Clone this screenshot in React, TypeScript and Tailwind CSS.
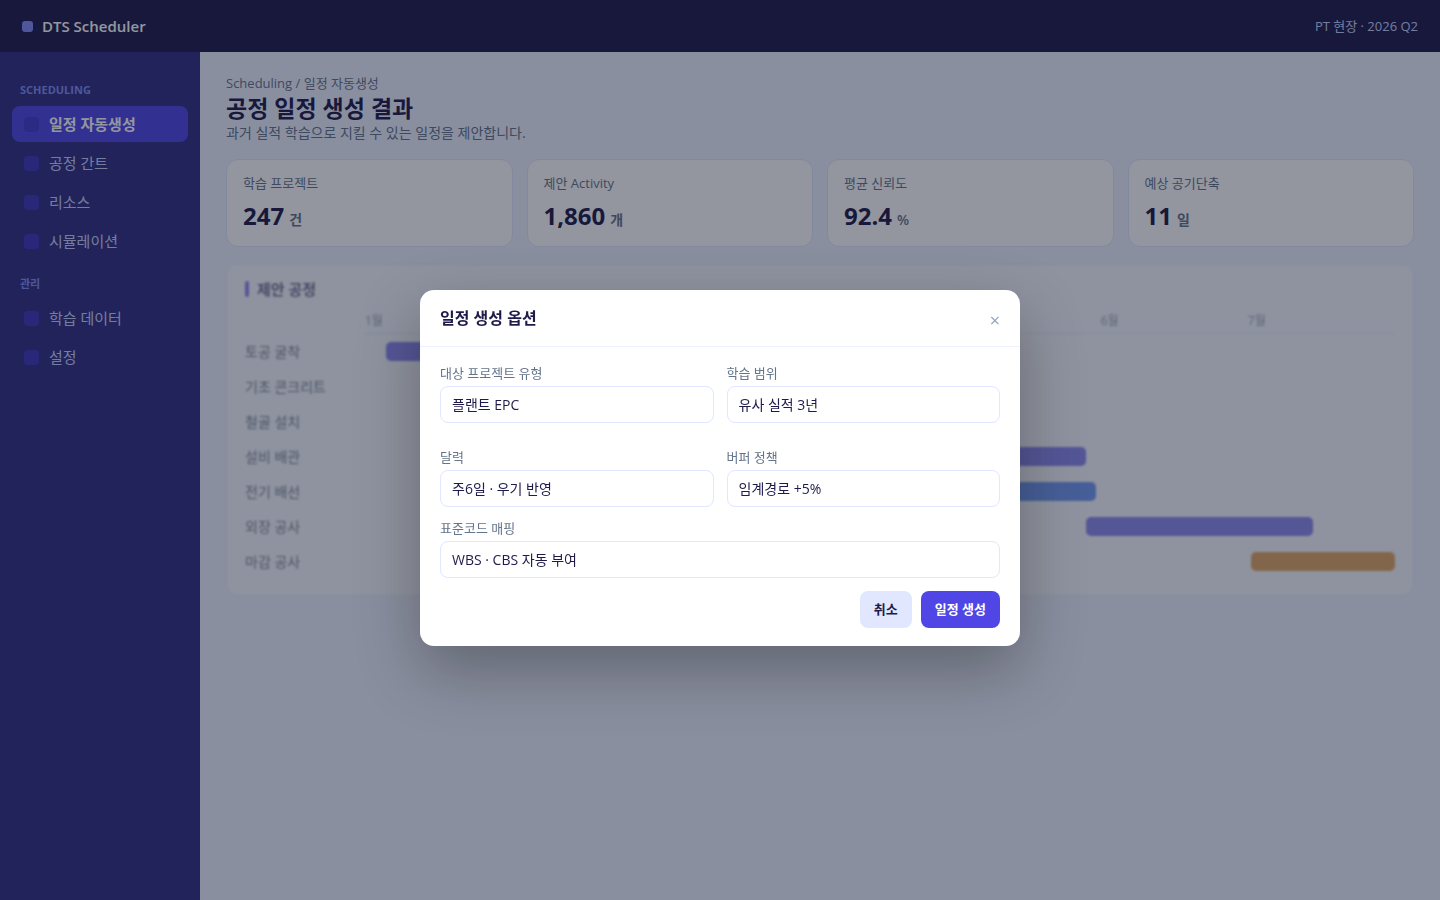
import { useState } from 'react';

interface NavGroup {
  title: string;
  items: string[];
}

const navGroups: NavGroup[] = [
  { title: 'SCHEDULING', items: ['일정 자동생성', '공정 간트', '리소스', '시뮬레이션'] },
  { title: '관리', items: ['학습 데이터', '설정'] },
];

const stats = [
  { label: '학습 프로젝트', value: '247', unit: '건' },
  { label: '제안 Activity', value: '1,860', unit: '개' },
  { label: '평균 신뢰도', value: '92.4', unit: '%' },
  { label: '예상 공기단축', value: '11', unit: '일' },
];

const months = ['1월', '2월', '3월', '4월', '5월', '6월', '7월'];

// start / width are percentages of the timeline
const tasks = [
  { name: '토공 굴착', start: 2, width: 18, color: 'bg-[#4f46e5]' },
  { name: '기초 콘크리트', start: 14, width: 20, color: 'bg-[#2563eb]' },
  { name: '철골 설치', start: 30, width: 24, color: 'bg-[#4f46e5]' },
  { name: '설비 배관', start: 44, width: 26, color: 'bg-[#4f46e5]' },
  { name: '전기 배선', start: 50, width: 21, color: 'bg-[#2563eb]' },
  { name: '외장 공사', start: 70, width: 22, color: 'bg-[#4f46e5]' },
  { name: '마감 공사', start: 86, width: 14, color: 'bg-[#d97706]' },
];

const Header = () => (
  <header className="flex h-[52px] items-center justify-between bg-[#1e1b4b] px-[22px]">
    <div className="flex items-center gap-[9px]">
      <span className="h-[11px] w-[11px] rounded-[3px] bg-[#818cf8]" />
      <span className="text-[15px] font-semibold text-white">DTS Scheduler</span>
    </div>
    <span className="pt-[2px] text-[13px] text-[#c7d2fe]">PT 현장 · 2026 Q2</span>
  </header>
);

const Sidebar = () => {
  const [active, setActive] = useState('일정 자동생성');

  return (
    <nav className="flex w-[200px] shrink-0 flex-col gap-[3px] bg-[#312e81] px-3 pt-4">
      {navGroups.map((group) => (
        <div key={group.title} className="mt-[14px] flex flex-col gap-[3px]">
          <h2 className="mb-[5px] px-2 text-[11px] leading-4 font-bold text-[#818cf8]">{group.title}</h2>
          {group.items.map((item) => (
            <button
              key={item}
              type="button"
              onClick={() => setActive(item)}
              className={`flex h-9 items-center gap-[10px] rounded-lg px-3 text-left text-[15px] ${
                item === active ? 'bg-[#4f46e5] font-semibold text-white' : 'text-[#c7d2fe]'
              }`}
            >
              <span className="h-[15px] w-[15px] rounded-[4px] bg-[#4338ca] opacity-80" />
              {item}
            </button>
          ))}
        </div>
      ))}
    </nav>
  );
};

const StatCards = () => (
  <div className="grid grid-cols-4 gap-[14px]">
    {stats.map((stat) => (
      <div key={stat.label} className="flex h-[88px] flex-col gap-2 rounded-xl border border-[#e0e7ff] bg-white px-4 pt-[14px]">
        <span className="text-[13px] leading-[18px] text-[#64748b]">{stat.label}</span>
        <p className="text-[24px] leading-8 font-bold text-[#1e1b4b]">
          {stat.value}
          <span className="ml-[5px] text-[14px] font-semibold text-[#64748b]">{stat.unit}</span>
        </p>
      </div>
    ))}
  </div>
);

const GanttCard = () => (
  <section className="mt-[17px] rounded-xl border border-[#e0e7ff] bg-white px-[18px] pt-[14px] pb-4 opacity-60 blur-[1px]">
    <h2 className="flex items-center gap-2 text-[15px] leading-5 font-bold text-[#1e1b4b]">
      <span className="h-4 w-1 rounded-[2px] bg-[#4f46e5]" />
      제안 공정
    </h2>
    <div className="mt-[10px] ml-[120px] flex h-[25px] border-b border-[#e0e7ff]">
      {months.map((month) => (
        <span key={month} className="flex-1 text-[12px] leading-6 text-[#64748b]">{month}</span>
      ))}
    </div>
    <div className="flex flex-col">
      {tasks.map((task) => (
        <div key={task.name} className="flex h-[35px] items-center">
          <span className="w-[120px] shrink-0 text-[14px] text-[#334155]">{task.name}</span>
          <div className="flex-1">
            <div
              className={`h-[19px] rounded-[5px] ${task.color}`}
              style={{ marginLeft: `${task.start}%`, width: `${task.width}%` }}
            />
          </div>
        </div>
      ))}
    </div>
  </section>
);

interface FieldProps {
  id: string;
  label: string;
  value: string;
}

const Field = ({ id, label, value }: FieldProps) => (
  <div className="mb-[13px] flex flex-col gap-[5px]">
    <label htmlFor={id} className="text-[13px] leading-4 text-[#64748b]">{label}</label>
    <input
      id={id}
      type="text"
      defaultValue={value}
      className="h-[37px] w-full rounded-lg border border-[#e0e7ff] bg-white px-[11px] pb-[2px] text-[14px] text-[#1e1b4b] outline-none focus:border-[#818cf8]"
    />
  </div>
);

const OptionsModal = ({ onClose }: { onClose: () => void }) => (
  <div className="fixed inset-0 flex items-center justify-center bg-[#0f172a]/45 pt-9">
    <div
      role="dialog"
      aria-labelledby="options-title"
      className="w-[600px] max-w-full rounded-[14px] bg-white shadow-[0_24px_64px_rgba(0,0,0,0.3)]"
    >
      <div className="flex h-[57px] items-center justify-between border-b border-[#eef2ff] px-5">
        <h2 id="options-title" className="text-[16px] font-semibold text-[#1e1b4b]">일정 생성 옵션</h2>
        <button type="button" onClick={onClose} aria-label="닫기" className="pt-1 text-[18px] leading-6 font-medium text-[#94a3b8]">
          ×
        </button>
      </div>
      <form className="px-5 py-[18px]" onSubmit={(e) => e.preventDefault()}>
        <div className="grid grid-cols-2 gap-[13px]">
          <Field id="project-type" label="대상 프로젝트 유형" value="플랜트 EPC" />
          <Field id="range" label="학습 범위" value="유사 실적 3년" />
          <Field id="calendar" label="달력" value="주6일 · 우기 반영" />
          <Field id="buffer" label="버퍼 정책" value="임계경로 +5%" />
        </div>
        <Field id="mapping" label="표준코드 매핑" value="WBS · CBS 자동 부여" />
        <div className="flex justify-end gap-[9px]">
          <button
            type="button"
            onClick={onClose}
            className="h-[37px] rounded-lg bg-[#e0e7ff] px-[14px] text-[13px] font-bold text-[#1e1b4b]"
          >
            취소
          </button>
          <button type="submit" className="h-[37px] rounded-lg bg-[#4f46e5] px-[14px] text-[13px] font-bold text-white">
            일정 생성
          </button>
        </div>
      </form>
    </div>
  </div>
);

const App = () => {
  const [open, setOpen] = useState(true);

  return (
    <div className="flex min-h-screen flex-col bg-[#eef2ff] font-['Open_Sans','Noto_Sans_CJK_KR',sans-serif]">
      <Header />
      <div className="flex flex-1">
        <Sidebar />
        <main className="min-w-0 flex-1 px-[26px] pt-[22px]">
          <p className="text-[13px] leading-[18px] text-[#64748b]">Scheduling / 일정 자동생성</p>
          <h1 className="text-[23px] leading-8 font-bold text-[#1e1b4b]">공정 일정 생성 결과</h1>
          <p className="mb-[17px] text-[14px] leading-[18px] text-[#64748b]">
            과거 실적 학습으로 지킬 수 있는 일정을 제안합니다.
          </p>
          <StatCards />
          <GanttCard />
        </main>
      </div>
      {open && <OptionsModal onClose={() => setOpen(false)} />}
    </div>
  );
};

export default App;
